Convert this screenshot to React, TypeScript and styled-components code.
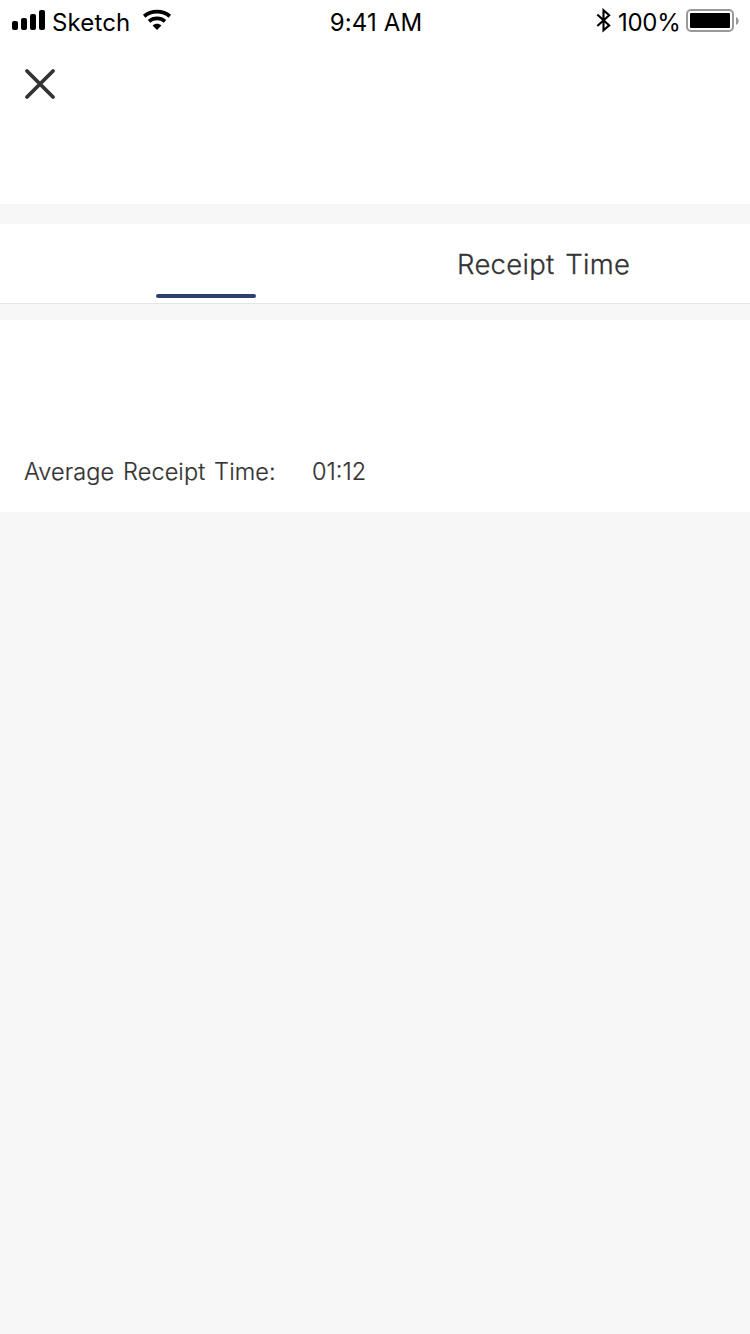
import React from "react";
import styled, { createGlobalStyle } from "styled-components";

const GlobalStyle = createGlobalStyle`
  * { box-sizing: border-box; }
  body { margin: 0; background: #f7f7f7; font-family: Inter, "Liberation Sans", sans-serif; }
  svg { display: block; flex: none; }
`;

const Screen = styled.main`
  width: 750px;
  min-height: 1334px;
  background: #f7f7f7;
  color: #333;
`;

const Header = styled.header`
  height: 204px;
  background: #fff;
`;

const StatusBar = styled.div`
  display: grid;
  grid-template-columns: 1fr auto 1fr;
  height: 40px;
  padding: 0 10px 0 12px;
  color: #000;
`;

const StatusGroup = styled.div<{ $end?: boolean }>`
  display: flex;
  align-items: flex-start;
  justify-content: ${(p) => (p.$end ? "flex-end" : "flex-start")};
`;

const StatusText = styled.span<{ $spacing: number; $width?: number }>`
  width: ${(p) => (p.$width ? `${p.$width}px` : "auto")};
  padding-top: 8px;
  font-size: 24px;
  line-height: 30px;
  font-weight: 400;
  letter-spacing: ${(p) => p.$spacing}px;
  white-space: nowrap;
`;

const IconSlot = styled.span<{ $top: number; $gap?: number }>`
  padding-top: ${(p) => p.$top}px;
  padding-right: ${(p) => p.$gap ?? 0}px;
`;

const CloseButton = styled.button`
  display: block;
  margin: 28px 0 0 24px;
  padding: 0;
  border: 0;
  background: none;
`;

const Tabs = styled.nav`
  display: grid;
  grid-template-columns: 412px 1fr;
  height: 80px;
  margin-top: 20px;
  background: #fff;
  border-bottom: 1px solid #e5e5e5;
`;

const Tab = styled.div`
  display: flex;
  flex-direction: column;
  align-items: center;
`;

const TabLabel = styled.span`
  width: 248px;
  padding-top: 22px;
  font-size: 27.5px;
  line-height: 36px;
  font-weight: 300;
  -webkit-text-stroke: 0.3px currentColor;
  letter-spacing: 0.3px;
  word-spacing: 2.5px;
  white-space: nowrap;
`;

const Indicator = styled.span`
  width: 100px;
  height: 4px;
  margin-top: 70px;
  border-radius: 2px;
  background: #2f3f6f;
`;

const Summary = styled.section`
  display: flex;
  align-items: flex-end;
  height: 192px;
  margin-top: 16px;
  padding: 0 24px 24px;
  background: #fff;
  font-size: 23.5px;
  line-height: 32px;
  font-weight: 300;
  -webkit-text-stroke: 0.2px currentColor;
  white-space: nowrap;
`;

const SummaryLabel = styled.span`
  width: 288px;
  letter-spacing: 0.08px;
  word-spacing: 2.2px;
`;

const SummaryValue = styled.span`
  letter-spacing: 0;
`;

export default function App() {
  return (
    <Screen>
      <GlobalStyle />
      <Header>
        <StatusBar>
          <StatusGroup>
            <IconSlot $top={10} $gap={7}>
              <svg width="33" height="20" viewBox="0 0 33 20">
                <rect x="0" y="11" width="6" height="9" rx="2" />
                <rect x="9" y="8" width="6" height="12" rx="2" />
                <rect x="18" y="4" width="6" height="16" rx="2" />
                <rect x="27" y="0" width="6" height="20" rx="2" />
              </svg>
            </IconSlot>
            <StatusText $spacing={0.15} $width={90}>Sketch</StatusText>
            <IconSlot $top={9}>
              <svg width="30" height="22" viewBox="0 0 30 22" fill="none" stroke="#000">
                <path d="M2.2 7.2C9.3 1.1 20.7 1.1 27.8 7.2" strokeWidth="3.8" />
                <path d="M7 12.3C11.5 8.4 18.5 8.4 23 12.3" strokeWidth="3.7" />
                <path d="M10.6 16.5C13.1 14.3 16.9 14.3 19.4 16.5L15 21Z" fill="#000" stroke="none" />
              </svg>
            </IconSlot>
          </StatusGroup>
          <StatusText $spacing={0.15}>9:41 AM</StatusText>
          <StatusGroup $end>
            <IconSlot $top={8} $gap={6}>
              <svg width="16" height="25" viewBox="0 0 16 25" fill="none" stroke="#000" strokeWidth="2.1">
                <path d="M1.3 6.5L13.2 17.4L7.5 22.2V2.2L13.2 7.2L1.3 18" />
              </svg>
            </IconSlot>
            <StatusText $spacing={-0.3} $width={68}>100%</StatusText>
            <IconSlot $top={9}>
              <svg width="54" height="23" viewBox="0 0 54 23">
                <rect x="1" y="1" width="46" height="21" rx="4" fill="none" stroke="#999" strokeWidth="2" />
                <rect x="4" y="4" width="40" height="15" rx="1" />
                <path d="M50 8C53.5 9.2 53.5 14.8 50 16Z" fill="#999" />
              </svg>
            </IconSlot>
          </StatusGroup>
        </StatusBar>
        <CloseButton aria-label="Close">
          <svg width="32" height="32" viewBox="0 0 32 32" fill="none" stroke="#333" strokeWidth="3.8" strokeLinecap="round">
            <path d="M3 3L29 29M29 3L3 29" />
          </svg>
        </CloseButton>
      </Header>
      <Tabs>
        <Tab>
          <Indicator />
        </Tab>
        <Tab>
          <TabLabel>Receipt Time</TabLabel>
        </Tab>
      </Tabs>
      <Summary>
        <SummaryLabel>Average Receipt Time:</SummaryLabel>
        <SummaryValue>01:12</SummaryValue>
      </Summary>
    </Screen>
  );
}
